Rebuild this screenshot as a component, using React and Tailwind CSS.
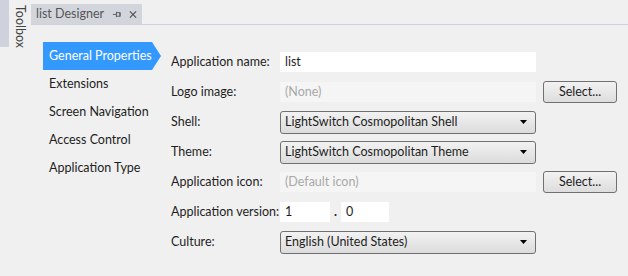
import { useState } from 'react'

const NAV = ['General Properties', 'Extensions', 'Screen Navigation', 'Access Control', 'Application Type']

function Label({ children }) {
  return <span className="w-[109px] shrink-0 whitespace-nowrap text-[#1e1e1e]">{children}</span>
}

function TextBox({ value, disabled, className = 'w-[256px]' }) {
  return (
    <div
      className={`${className} h-[20px] flex items-center px-[5px] whitespace-nowrap ${
        disabled ? 'bg-[#f5f5f5] text-[#a8a8a8]' : 'bg-white text-[#1e1e1e]'
      }`}
    >
      {value}
    </div>
  )
}

function Dropdown({ value }) {
  return (
    <div className="w-[256px] h-[23px] flex items-center justify-between pl-[4px] pr-[8px] rounded-[3px] border border-[#707070] bg-gradient-to-b from-[#f2f2f2] to-[#dcdcdc] text-[#1e1e1e] whitespace-nowrap">
      <span>{value}</span>
      <svg width="7" height="4" viewBox="0 0 7 4">
        <path d="M0 0h7L3.5 4z" fill="#000" />
      </svg>
    </div>
  )
}

function SelectButton() {
  return (
    <button className="ml-[7px] w-[74px] h-[22px] rounded-[3px] border border-[#707070] bg-gradient-to-b from-[#f2f2f2] to-[#dddddd] text-[#1e1e1e]">
      Select...
    </button>
  )
}

export default function App() {
  const [active] = useState(0)

  return (
    <div className="w-[628px] h-[276px] bg-[#f0f0f0] flex text-[12.5px] font-['Lato',sans-serif] overflow-hidden">
      {/* toolbox strip */}
      <div className="w-[9px] h-[47px] bg-[#cfd2dc]" />
      <div className="w-[22px] pt-[5px] flex justify-center">
        <span className="[writing-mode:vertical-rl] text-[#444] leading-none">Toolbox</span>
      </div>

      <div className="flex-1 flex flex-col">
        {/* tab header */}
        <div className="h-[25px] flex items-end border-b border-[#cfd1da]">
          <div className="w-[111px] h-[20px] bg-[#d3d5dd] flex items-center px-[5px] text-[#555] gap-[8px] whitespace-nowrap">
            <span className="flex-1">list Designer</span>
            <svg width="10" height="10" viewBox="0 0 10 10" fill="none" stroke="#555" strokeWidth="1">
              <path d="M1 5.5h4M5 2.5v6M5 3.5h4v4h-4M9 3v5" />
            </svg>
            <svg width="9" height="9" viewBox="0 0 9 9" stroke="#555" strokeWidth="1.4">
              <path d="M1 1l7 7M8 1l-7 7" />
            </svg>
          </div>
        </div>

        <div className="flex pt-[17px]">
          {/* nav */}
          <div className="ml-[12px] w-[128px] flex flex-col">
            {NAV.map((n, i) =>
              i === active ? (
                <div key={n} className="relative h-[28px] w-[109px] bg-[#3399ff] text-white flex items-center pl-[6px] whitespace-nowrap">
                  {n}
                  <span className="absolute left-full top-0 w-0 h-0 border-y-[14px] border-y-transparent border-l-[9px] border-l-[#3399ff]" />
                </div>
              ) : (
                <div key={n} className="h-[28px] flex items-center pl-[6px] text-[#1e1e1e] whitespace-nowrap">
                  {n}
                </div>
              )
            )}
          </div>

          {/* form */}
          <div className="flex flex-col pt-[5px]">
            <div className="h-[30px] flex items-center">
              <Label>Application name:</Label>
              <TextBox value="list" />
            </div>
            <div className="h-[30px] flex items-center">
              <Label>Logo image:</Label>
              <TextBox value="(None)" disabled />
              <SelectButton />
            </div>
            <div className="h-[30px] flex items-center">
              <Label>Shell:</Label>
              <Dropdown value="LightSwitch Cosmopolitan Shell" />
            </div>
            <div className="h-[30px] flex items-center">
              <Label>Theme:</Label>
              <Dropdown value="LightSwitch Cosmopolitan Theme" />
            </div>
            <div className="h-[30px] flex items-center">
              <Label>Application icon:</Label>
              <TextBox value="(Default icon)" disabled />
              <SelectButton />
            </div>
            <div className="h-[30px] flex items-center">
              <Label>Application version:</Label>
              <TextBox value="1" className="w-[50px]" />
              <span className="w-[11px] text-center text-[#1e1e1e] font-bold">.</span>
              <TextBox value="0" className="w-[48px]" />
            </div>
            <div className="h-[30px] flex items-center">
              <Label>Culture:</Label>
              <Dropdown value="English (United States)" />
            </div>
          </div>
        </div>
      </div>
    </div>
  )
}
